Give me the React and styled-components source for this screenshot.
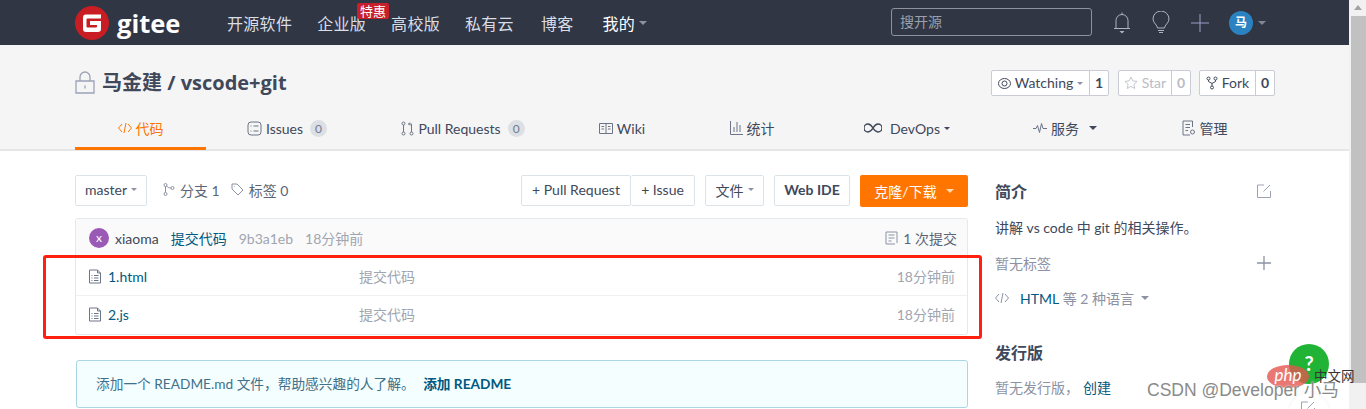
import React from 'react'
import styled, { createGlobalStyle } from 'styled-components'

const Global = createGlobalStyle`
  html, body { margin: 0; padding: 0; height: 409px; overflow: hidden; background: #fff; }
  body { font-family: Lato, "Noto Sans CJK SC", sans-serif; color: #40485b; font-size: 14px; }
  * { box-sizing: border-box; }
`

const Shell = styled.div`
  position: relative;
  display: flex;
  width: 1366px;
  height: 409px;
  overflow: hidden;
`
const Page = styled.div`
  flex: 1;
  min-width: 0;
`
const Track = styled.div`
  width: 17px;
  background: #f1f1f1;
  display: flex;
  flex-direction: column;
  align-items: flex-end;
  padding-top: 5px;
`
const ArrowUp = styled.div`
  width: 0;
  height: 0;
  margin: 0 4px 6px 0;
  border-left: 4px solid transparent;
  border-right: 4px solid transparent;
  border-bottom: 5px solid #a3a3a3;
`
const Thumb = styled.div`
  width: 15px;
  height: 367px;
  background: #c1c1c1;
`

const TopBar = styled.header`
  height: 45px;
  background: #303643;
  padding-left: 75px;
`
const TopInner = styled.div`
  width: 1200px;
  height: 45px;
  display: flex;
  align-items: center;
`
const Logo = styled.div`
  display: flex;
  align-items: center;
  gap: 8px;
  width: 152px;
  color: #fff;
  font-family: "Open Sans", sans-serif;
  font-size: 25.5px;
  font-weight: 700;
`
const Nav = styled.nav`
  display: flex;
  align-items: center;
  gap: 25px;
`
const NavItem = styled.a`
  position: relative;
  display: flex;
  align-items: center;
  gap: 4px;
  font-size: 16px;
  letter-spacing: .3px;
  color: ${p => (p.$active ? '#fff' : '#d9dde6')};
  margin-left: ${p => p.$shift || 0}px;
`
const Hot = styled.span`
  position: absolute;
  top: -8px;
  right: -23px;
  width: 32px;
  height: 16px;
  line-height: 16px;
  letter-spacing: 0;
  text-align: center;
  font-size: 13px;
  color: #fff;
  background: #c7202b;
  border-radius: 2px;
`
const Caret = styled.i`
  display: inline-block;
  width: 0;
  height: 0;
  margin-left: ${p => p.$ml || 0}px;
  border-left: ${p => p.$s || 4}px solid transparent;
  border-right: ${p => p.$s || 4}px solid transparent;
  border-top: ${p => p.$s || 4}px solid ${p => p.$c || '#8c92a4'};
`
const TopRight = styled.div`
  margin-left: auto;
  display: flex;
  align-items: center;
`
const Search = styled.div`
  width: 201px;
  height: 28px;
  margin-right: 21px;
  margin-top: -1px;
  border: 1px solid #8d929e;
  border-radius: 3px;
  padding-left: 8px;
  line-height: 25px;
  font-size: 14px;
  color: #9aa0ac;
`
const TopIcon = styled.span`
  display: flex;
  width: ${p => p.$w}px;
  margin-right: ${p => p.$mr}px;
`
const Avatar = styled.span`
  width: 24px;
  height: 24px;
  border-radius: 50%;
  background: #2b82c0;
  color: #fff;
  font-size: 12px;
  font-weight: 700;
  text-align: center;
  line-height: 24px;
  margin-right: 5px;
`

const RepoHead = styled.section`
  height: 106px;
  background: #f5f5f5;
  border-bottom: 2px solid #e6e6e6;
  padding-left: 75px;
`
const RepoInner = styled.div`
  width: 1200px;
`
const TitleRow = styled.div`
  height: 63px;
  padding-top: 25px;
  display: flex;
  align-items: flex-start;
  justify-content: space-between;
`
const Title = styled.h1`
  margin: 0;
  display: flex;
  align-items: center;
  gap: 7px;
  font-family: "Open Sans", "Noto Sans CJK SC", sans-serif;
  font-size: 20px;
  line-height: 25px;
  font-weight: 700;
  color: #40485b;
  white-space: pre;
`
const Socials = styled.div`
  display: flex;
  gap: 8px;
`
const Social = styled.div`
  display: flex;
  height: 26px;
  background: #fff;
  border: 1px solid #c9ccd4;
  border-radius: 2px;
  font-size: 14px;
  line-height: 24px;
  color: ${p => (p.$off ? '#b9bcc4' : '#40485b')};
  width: ${p => p.$w}px;
  margin-right: ${p => p.$mr || 0}px;
`
const SocialLabel = styled.span`
  flex: 1;
  display: flex;
  align-items: center;
  justify-content: center;
  gap: 4px;
`
const SocialCount = styled.span`
  width: 19px;
  text-align: center;
  font-weight: 700;
  border-left: 1px solid #c9ccd4;
`
const Tabs = styled.div`
  display: grid;
  grid-template-columns: 131px 162px 190px 128px 132px 178px 138px 141px;
  height: 41px;
`
const Tab = styled.a`
  display: flex;
  align-items: center;
  justify-content: center;
  gap: 4px;
  height: 42px;
  font-size: 14px;
  color: ${p => (p.$active ? '#ff7500' : '#40485b')};
  border-bottom: 3px solid ${p => (p.$active ? '#ff7500' : 'transparent')};
  padding-top: 1px;
`
const Count = styled.span`
  min-width: 17px;
  height: 17px;
  margin-left: 3px;
  border-radius: 9px;
  background: #dcdfe4;
  color: #6f7b93;
  font-size: 12px;
  line-height: 17px;
  text-align: center;
`
const TabLabel = styled.span`
  margin-left: 4px;
`

const Main = styled.main`
  padding: 24px 0 0 75px;
  display: flex;
`
const Left = styled.div`
  width: 893px;
`
const Toolbar = styled.div`
  display: flex;
  align-items: flex-start;
  height: 32px;
  font-size: 14px;
`
const Btn = styled.a`
  display: flex;
  align-items: center;
  justify-content: center;
  gap: 4px;
  height: 31px;
  width: ${p => p.$w}px;
  margin-left: ${p => p.$ml || 0}px;
  padding-bottom: 2px;
  background: #fff;
  border: 1px solid #dce3e8;
  border-radius: 2px;
  font-size: 14px;
  font-weight: ${p => (p.$bold ? 700 : 400)};
  color: #40485b;
`
const BtnJoin = styled.div`
  display: flex;
  margin-left: auto;
  ${Btn} + ${Btn} { border-left: 0; }
`
const Clone = styled.a`
  display: flex;
  align-items: center;
  justify-content: center;
  gap: 9px;
  width: 108px;
  height: 32px;
  margin-left: 10px;
  background: #ff7500;
  border-radius: 2px;
  color: #fff;
  font-size: 14px;
`
const Meta = styled.span`
  display: flex;
  align-items: center;
  gap: 5px;
  height: 31px;
  padding-bottom: 2px;
  margin-left: ${p => p.$ml}px;
  font-size: 14px;
  color: #5c6577;
`
const FileBox = styled.div`
  margin-top: 11px;
  height: 117px;
  border: 1px solid #e3e9ed;
  border-radius: 3px;
  overflow: hidden;
`
const Commit = styled.div`
  display: flex;
  align-items: center;
  height: 38px;
  padding: 1px 10px 0 13px;
  background: #fafafa;
  border-bottom: 1px solid #e3e9ed;
  font-size: 14px;
`
const UserDot = styled.span`
  width: 20px;
  height: 20px;
  border-radius: 50%;
  background: #9b59b6;
  color: #fff;
  font-size: 12px;
  line-height: 19px;
  text-align: center;
  margin-right: 6px;
`
const Muted = styled.span`
  color: #a0a5b0;
  margin-left: ${p => p.$ml || 0}px;
`
const Link = styled.a`
  color: #005980;
  margin-left: ${p => p.$ml || 0}px;
`
const CommitCount = styled.span`
  margin-left: auto;
  display: flex;
  align-items: center;
  gap: 5px;
  color: #5c6577;
`
const Row = styled.div`
  display: grid;
  grid-template-columns: 271px 1fr auto;
  align-items: center;
  height: 38px;
  padding: 0 12px ${p => (p.$last ? 1 : 0)}px;
  font-size: 14px;
  border-top: ${p => (p.$last ? '1px solid #eef0f2' : '0')};
`
const FileName = styled.span`
  display: flex;
  align-items: center;
  gap: 6px;
  color: #005980;
`
const Readme = styled.div`
  margin-top: 25px;
  margin-left: 1px;
  width: 892px;
  height: 48px;
  padding-left: 19px;
  line-height: 46px;
  font-size: 13.7px;
  color: #40708a;
  background: #f5feff;
  border: 1px solid #a9d5e6;
  border-radius: 3px;
  white-space: pre;
`
const ReadmeLink = styled.b`
  color: #005980;
  font-weight: 700;
  margin-left: 5px;
`
const Side = styled.aside`
  width: 275px;
  margin-left: 27px;
  font-size: 14px;
`
const SideHead = styled.h3`
  margin: ${p => p.$mt || 0}px 0 0;
  display: flex;
  justify-content: space-between;
  align-items: center;
  width: 276px;
  height: 32px;
  font-size: 16px;
  font-weight: 700;
  color: #40485b;
`
const SideText = styled.div`
  display: flex;
  align-items: center;
  justify-content: ${p => (p.$between ? 'space-between' : 'flex-start')};
  width: 276px;
  height: 20px;
  margin-top: ${p => p.$mt}px;
  color: ${p => p.$c || '#40485b'};
  white-space: pre;
`

/* things lying over the page */
const RedMark = styled.div`
  position: absolute;
  left: 43px;
  top: 255px;
  width: 939px;
  height: 84px;
  border: 3px solid #ff2010;
  border-radius: 3px;
`
const HelpDot = styled.div`
  position: absolute;
  left: 1289px;
  top: 344px;
  width: 40px;
  height: 40px;
  border-radius: 50%;
  background: #21b336;
  color: #fff;
  font-size: 20px;
  font-weight: 700;
  line-height: 38px;
  text-align: center;
`
const EditDot = styled.div`
  position: absolute;
  left: 1289px;
  top: 393px;
  width: 40px;
  height: 40px;
  border-radius: 50%;
  background: #fff;
  box-shadow: 0 0 4px rgba(0, 0, 0, .06);
  padding: 8px 0 0 12px;
`
const PhpMark = styled.div`
  position: absolute;
  left: 1267px;
  top: 365px;
  width: 42px;
  height: 23px;
  border-radius: 50%;
  background: rgba(228, 86, 80, .8);
  color: #fff;
  font-size: 17px;
  font-style: italic;
  line-height: 19px;
  text-align: center;
`
const CnMark = styled.div`
  position: absolute;
  left: 1314px;
  top: 366px;
  font-size: 13.5px;
  line-height: 20px;
  color: #333;
`
const Csdn = styled.div`
  position: absolute;
  left: 1147px;
  top: 378px;
  font-family: "Liberation Sans", "Noto Sans CJK SC", sans-serif;
  font-size: 17.5px;
  line-height: 24px;
  color: #8a8a8a;
  white-space: pre;
  text-shadow: 0 0 2px #fff;
`

const Line = ({ w = 16, h = 16, vb = '0 0 16 16', c = '#6c7486', sw = 1, children }) => (
  <svg width={w} height={h} viewBox={vb} fill="none" stroke={c} strokeWidth={sw}>{children}</svg>
)

const FileIcon = () => (
  <Line w={14} h={15} vb="0 0 14 15" c="#6c7486">
    <path d="M1.500 1h8l3 3v10h-11zM9.500 1v3h3M3.500 6.500h1M6 6.500h4.500M3.500 9h1M6 9h4.500M3.500 11.500h1M6 11.500h4.500" />
  </Line>
)
const CodeIcon = ({ c }) => (
  <Line w={14} h={14} vb="0 0 14 14" c={c}>
    <path d="M4 3l-3.500 4 3.500 4M10 3l3.500 4-3.500 4M8 2l-2 10" />
  </Line>
)

export default function App() {
  return (
    <Shell>
      <Global />
      <Page>
        <TopBar>
          <TopInner>
            <Logo>
              <svg width="34" height="34" viewBox="0 0 34 34">
                <circle cx="17" cy="17" r="17" fill="#c71d23" />
                <path d="M8 11.500a3 3 0 0 1 3-3h15v4h-13.500a1 1 0 0 0-1 1v7a1 1 0 0 0 1 1h8.500a1 1 0 0 0 1-1v-1.500h-7v-4h11v8a3 3 0 0 1-3 3h-12a3 3 0 0 1-3-3z" fill="#fff" />
              </svg>
              gitee
            </Logo>
            <Nav>
              <NavItem>开源软件</NavItem>
              <NavItem>企业版<Hot>特惠</Hot></NavItem>
              <NavItem>高校版</NavItem>
              <NavItem>私有云</NavItem>
              <NavItem $shift={2}>博客</NavItem>
              <NavItem $shift={4} $active>我的<Caret /></NavItem>
            </Nav>
            <TopRight>
              <Search>搜开源</Search>
              <TopIcon $w={18} $mr={20}>
                <Line w={18} h={24} vb="0 0 18 24" c="#aeb4c2">
                  <path d="M1 17.500h16M3 17.500v-8a6 6 0 0 1 12 0v8M9 1.500v2" />
                  <path d="M6.500 20h5l-2.500 2.500z" fill="#aeb4c2" stroke="none" />
                </Line>
              </TopIcon>
              <TopIcon $w={20} $mr={20}>
                <Line w={20} h={24} vb="0 0 20 24" c="#aeb4c2">
                  <path d="M6.500 17c0-3-4.500-5-4.500-9a8 8 0 0 1 16 0c0 4-4.500 6-4.500 9zM7 19.500h6M8 21.500h4" />
                </Line>
              </TopIcon>
              <TopIcon $w={18} $mr={20}>
                <Line w={18} h={18} vb="0 0 18 18" c="#9aa0c8">
                  <path d="M0 9h18M9 0v18" />
                </Line>
              </TopIcon>
              <Avatar>马</Avatar>
              <Caret $s={4} $c="#7f8696" />
              <TopIcon $w={0} $mr={9} />
            </TopRight>
          </TopInner>
        </TopBar>

        <RepoHead>
          <RepoInner>
            <TitleRow>
              <Title>
                <Line w={20} h={23} vb="0 0 20 23" c="#9ba3b5" sw={1.300}>
                  <path d="M1 10h18v12h-18zM5 10v-4a5 5 0 0 1 10 0v4M10 14.500v3" />
                </Line>
                马金建 / vscode+git
              </Title>
              <Socials>
                <Social $w={118} $mr={1}>
                  <SocialLabel>
                    <Line w={13} h={13} vb="0 0 13 13" c="#40485b">
                      <ellipse cx="6.500" cy="6.500" rx="6" ry="5" />
                      <circle cx="6.500" cy="6.500" r="2.500" />
                    </Line>
                    Watching<Caret $s={3.500} />
                  </SocialLabel>
                  <SocialCount>1</SocialCount>
                </Social>
                <Social $w={73} $off>
                  <SocialLabel>
                    <Line w={14} h={14} vb="0 0 14 14" c="#c4c7ce">
                      <path d="M7 1l1.800 3.900 4.200.5-3.100 2.900.8 4.200-3.700-2.100-3.700 2.100.8-4.200-3.100-2.900 4.200-.5z" />
                    </Line>
                    Star
                  </SocialLabel>
                  <SocialCount>0</SocialCount>
                </Social>
                <Social $w={76}>
                  <SocialLabel>
                    <Line w={12} h={14} vb="0 0 12 14" c="#40485b">
                      <circle cx="2.500" cy="2.500" r="1.500" />
                      <circle cx="9.500" cy="2.500" r="1.500" />
                      <circle cx="6" cy="11.500" r="1.500" />
                      <path d="M2.500 4v1.500l3.500 2 3.500-2v-1.500M6 7.500v2.500" />
                    </Line>
                    Fork
                  </SocialLabel>
                  <SocialCount>0</SocialCount>
                </Social>
              </Socials>
            </TitleRow>
            <Tabs>
              <Tab $active><CodeIcon c="#ff7500" />代码</Tab>
              <Tab>
                <Line w={15} h={15} vb="0 0 15 15">
                  <rect x="1" y="1" width="13" height="13" rx="3" />
                  <path d="M6.500 5h5M6.500 10h5M3.500 5h1M3.500 10h1" />
                </Line>
                Issues<Count>0</Count>
              </Tab>
              <Tab>
                <Line w={13} h={15} vb="0 0 13 15">
                  <circle cx="2.500" cy="2.500" r="1.500" />
                  <circle cx="2.500" cy="12.500" r="1.500" />
                  <circle cx="10.500" cy="12.500" r="1.500" />
                  <path d="M2.500 4v7M10.500 11v-8h-3M9 1.500l-1.500 1.500 1.500 1.500" />
                </Line>
                Pull Requests<Count>0</Count>
              </Tab>
              <Tab>
                <Line w={14} h={13} vb="0 0 14 13">
                  <path d="M.5 1.500h13v10h-13zM7 1.500v10M2.500 4.500h2.500M2.500 7h2.500M9 4.500h2.500M9 7h2.500" />
                </Line>
                Wiki
              </Tab>
              <Tab>
                <Line w={13} h={14} vb="0 0 13 14">
                  <path d="M.5 0v13.500h12.500M4 6v5M7 1v10M10 4v7" />
                </Line>
                统计
              </Tab>
              <Tab>
                <Line w={18} h={10} vb="0 0 18 10" c="#40485b" sw={1.400}>
                  <path d="M9 5c-1.500-2.500-3-4-5-4a4 4 0 0 0 0 8c2 0 3.500-1.500 5-4s3-4 5-4a4 4 0 0 1 0 8c-2 0-3.500-1.500-5-4z" />
                </Line>
                <TabLabel>DevOps</TabLabel><Caret $s={3.500} $c="#40485b" />
              </Tab>
              <Tab>
                <Line w={14} h={12} vb="0 0 14 12">
                  <path d="M0 6.500h3l1.500-3 2 7 2-9 1.500 5h4" />
                </Line>
                服务<Caret $s={4.500} $c="#40485b" $ml={6} />
              </Tab>
              <Tab>
                <Line w={14} h={16} vb="0 0 14 16">
                  <path d="M10.500 7v-6h-9.500v14h7M3.500 4.500h4.500M3.500 7.500h4.500M3.500 10.500h2.500" />
                  <circle cx="10.500" cy="12" r="2" />
                </Line>
                管理
              </Tab>
            </Tabs>
          </RepoInner>
        </RepoHead>

        <Main>
          <Left>
            <Toolbar>
              <Btn $w={72}>master<Caret $s={3.500} /></Btn>
              <Meta $ml={16}>
                <Line w={12} h={13} vb="0 0 12 13" c="#8a92a3">
                  <circle cx="2.500" cy="2" r="1.500" />
                  <circle cx="2.500" cy="11" r="1.500" />
                  <circle cx="9.500" cy="5" r="1.500" />
                  <path d="M2.500 3.500v6M3.500 3c1 1.500 3 2 4.500 2" />
                </Line>
                分支 1
              </Meta>
              <Meta $ml={11}>
                <Line w={13} h={13} vb="0 0 13 13" c="#8a92a3">
                  <path d="M1 1h5l6 6-5 5-6-6zM3.500 3.500h.5" />
                </Line>
                标签 0
              </Meta>
              <BtnJoin>
                <Btn $w={110}>+ Pull Request</Btn>
                <Btn $w={64}>+ Issue</Btn>
              </BtnJoin>
              <Btn $w={59} $ml={10}>文件<Caret $s={3.500} /></Btn>
              <Btn $w={76} $ml={10} $bold>Web IDE</Btn>
              <Clone>克隆/下载<Caret $s={4.500} $c="#ffd9b0" /></Clone>
            </Toolbar>
            <FileBox>
              <Commit>
                <UserDot>x</UserDot>
                <span>xiaoma</span>
                <Link $ml={12}>提交代码</Link>
                <Muted $ml={12}>9b3a1eb</Muted>
                <Muted $ml={12}>18分钟前</Muted>
                <CommitCount>
                  <Line w={13} h={14} vb="0 0 13 14" c="#8a92a3">
                    <path d="M12 12v-11h-11v12h9M3.500 4h6M3.500 7h6M3.500 10h3" />
                  </Line>
                  1 次提交
                </CommitCount>
              </Commit>
              <Row>
                <FileName><FileIcon />1.html</FileName>
                <Muted>提交代码</Muted>
                <Muted>18分钟前</Muted>
              </Row>
              <Row $last>
                <FileName><FileIcon />2.js</FileName>
                <Muted>提交代码</Muted>
                <Muted>18分钟前</Muted>
              </Row>
            </FileBox>
            <Readme>添加一个 README.md 文件，帮助感兴趣的人了解。 <ReadmeLink>添加 README</ReadmeLink></Readme>
          </Left>
          <Side>
            <SideHead>
              简介
              <Line w={14} h={14} vb="0 0 14 14" c="#9ba3b5">
                <path d="M7 1h-6.500v12.500h13v-6.500M13 1l-6.500 6.500" />
              </Line>
            </SideHead>
            <SideText $mt={10}>讲解 vs code 中 git 的相关操作。</SideText>
            <SideText $mt={16} $c="#8c92a4" $between>
              暂无标签
              <Line w={14} h={14} vb="0 0 14 14" c="#8c92a4" sw={1.300}><path d="M0 7h14M7 0v14" /></Line>
            </SideText>
            <SideText $mt={15} $c="#8c92a4">
              <Line w={14} h={14} vb="0 0 14 14" c="#8c92a4"><path d="M4 3l-3.500 4 3.500 4M10 3l3.500 4-3.500 4M8 2l-2 10" /></Line>
              <Link $ml={11}>HTML</Link> 等 2 种语言
              <Caret $s={4.500} $ml={7} />
            </SideText>
            <SideHead $mt={28}>发行版</SideHead>
            <SideText $mt={9} $c="#8c92a4">暂无发行版，<Link $ml={4}>创建</Link></SideText>
          </Side>
        </Main>
      </Page>
      <Track>
        <ArrowUp />
        <Thumb />
      </Track>

      <RedMark />
      <EditDot>
        <Line w={14} h={14} vb="0 0 14 14" c="#9ba3b5">
          <path d="M7 1h-6.500v12.500h13v-6.500M13 1l-6.500 6.500" />
        </Line>
      </EditDot>
      <HelpDot>?</HelpDot>
      <PhpMark>php</PhpMark>
      <CnMark>中文网</CnMark>
      <Csdn>CSDN @Developer 小马</Csdn>
    </Shell>
  )
}
